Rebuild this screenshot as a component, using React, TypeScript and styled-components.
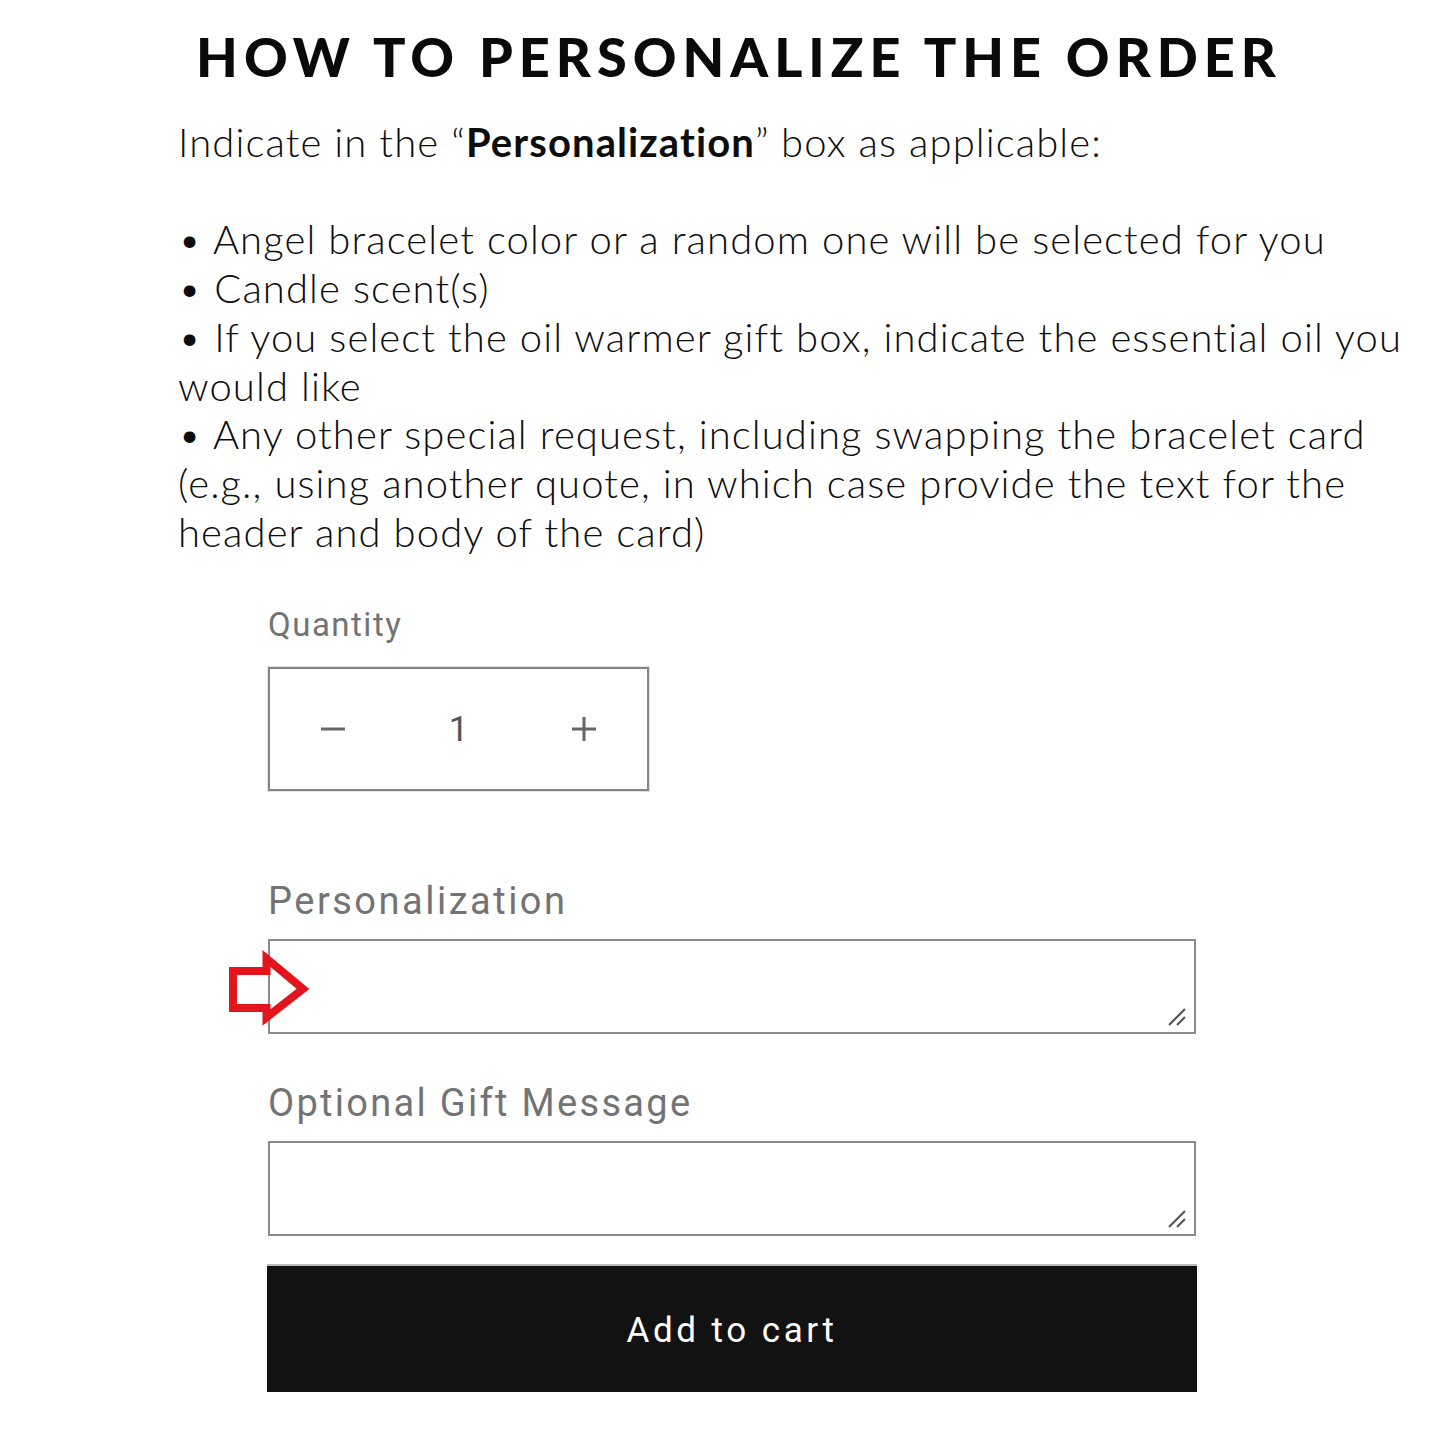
import React from "react";
import styled, { createGlobalStyle } from "styled-components";

const GlobalStyle = createGlobalStyle`
  html, body { margin: 0; padding: 0; background: #ffffff; }
  body { width: 1445px; min-height: 1445px; }
  * { box-sizing: border-box; }
`;

const Page = styled.div`
  width: 1445px;
  height: 1445px;
  background: #fff;
  padding-top: 22px;
  display: flex;
  flex-direction: column;
`;

const Heading = styled.h1`
  margin: 0 0 0 33px;
  text-align: center;
  font-family: Lato, "Liberation Sans", sans-serif;
  font-weight: 900;
  font-size: 54px;
  line-height: 70px;
  letter-spacing: 6px;
  color: #0a0a0a;
`;

const Instructions = styled.div`
  margin: 26px 0 0 178px;
  font-family: Lato, "Liberation Sans", sans-serif;
  font-weight: 300;
  font-size: 40px;
  letter-spacing: 1.1px;
  line-height: 48.7px;
  color: #0d0d0d;
  white-space: nowrap;
`;

const Strong = styled.b`
  font-weight: 700;
`;

const Form = styled.div`
  margin: 47px 0 0 268px;
  width: 928px;
  display: flex;
  flex-direction: column;
`;

const Label = styled.div<{ $size: number; $space: number }>`
  font-family: Roboto, "Liberation Sans", sans-serif;
  font-size: ${(p) => p.$size}px;
  letter-spacing: ${(p) => p.$space}px;
  line-height: 44px;
  color: #737373;
`;

const QtyBox = styled.div`
  margin-top: 20px;
  width: 381px;
  height: 124px;
  border: 2px solid #858585;
  box-shadow: 0 0 0 1px #e2e2e2;
  display: grid;
  grid-template-columns: repeat(3, 1fr);
  align-items: center;
  justify-items: center;
`;

const QtyButton = styled.button`
  border: 0;
  background: transparent;
  padding: 0;
  display: flex;
  align-items: center;
  justify-content: center;
  width: 40px;
  height: 40px;
`;

const QtyValue = styled.span`
  font-family: Roboto, "Liberation Sans", sans-serif;
  font-size: 35px;
  color: #555;
`;

const FieldGroup = styled.div<{ $top: number }>`
  margin-top: ${(p) => p.$top}px;
  display: flex;
  flex-direction: column;
`;

const AreaWrap = styled.div`
  position: relative;
  margin-top: 16px;
  width: 928px;
  height: 95px;
`;

const TextArea = styled.textarea`
  display: block;
  width: 100%;
  height: 100%;
  border: 2px solid #8a8a8a;
  border-radius: 0;
  resize: none;
  background: #fff;
  outline: none;
`;

const Grip = styled.svg`
  position: absolute;
  right: 8px;
  bottom: 6px;
`;

const Arrow = styled.svg`
  position: absolute;
  left: -46px;
  top: 7px;
  overflow: visible;
`;

const CartButton = styled.button`
  margin-top: 28px;
  width: 930px;
  margin-left: -1px;
  height: 128px;
  border: 0;
  border-top: 2px solid #bdbdbd;
  background: #121212;
  color: #fff;
  font-family: Roboto, "Liberation Sans", sans-serif;
  font-size: 35px;
  letter-spacing: 3.5px;
  padding-top: 4px;
`;

const ResizeGrip = () => (
  <Grip width="22" height="22" viewBox="0 0 22 22">
    <line x1="3" y1="19" x2="19" y2="3" stroke="#555" strokeWidth="2.2" />
    <line x1="11" y1="19" x2="19" y2="11" stroke="#555" strokeWidth="2.2" />
  </Grip>
);

export default function App() {
  return (
    <>
      <GlobalStyle />
      <Page>
        <Heading>HOW TO PERSONALIZE THE ORDER</Heading>
        <Instructions>
          Indicate in the “<Strong>Personalization</Strong>” box as applicable:
          <br />
          <br />• Angel bracelet color or a random one will be selected for you
          <br />• Candle scent(s)
          <br />• If you select the oil warmer gift box, indicate the essential oil you
          <br />would like
          <br />• Any other special request, including swapping the bracelet card
          <br />(e.g., using another quote, in which case provide the text for the
          <br />header and body of the card)
        </Instructions>
        <Form>
          <Label $size={33} $space={1.5}>Quantity</Label>
          <QtyBox>
            <QtyButton aria-label="Decrease quantity">
              <svg width="26" height="4" viewBox="0 0 26 4">
                <rect x="1" y="0.5" width="24" height="3" fill="#666" />
              </svg>
            </QtyButton>
            <QtyValue>1</QtyValue>
            <QtyButton aria-label="Increase quantity">
              <svg width="26" height="26" viewBox="0 0 26 26">
                <rect x="1" y="11.5" width="24" height="3" fill="#666" />
                <rect x="11.5" y="1" width="3" height="24" fill="#666" />
              </svg>
            </QtyButton>
          </QtyBox>
          <FieldGroup $top={88}>
            <Label $size={38} $space={2.5}>Personalization</Label>
            <AreaWrap>
              <TextArea aria-label="Personalization" />
              <ResizeGrip />
              <Arrow width="96" height="84" viewBox="0 0 96 84">
                <polygon
                  points="11,25 44.5,25 44.5,12.5 81,43 44.5,71.5 44.5,62 11,62"
                  fill="none"
                  stroke="#e3141d"
                  strokeWidth="8"
                  strokeLinejoin="miter"
                />
              </Arrow>
            </AreaWrap>
          </FieldGroup>
          <FieldGroup $top={47}>
            <Label $size={38} $space={2.3}>Optional Gift Message</Label>
            <AreaWrap>
              <TextArea aria-label="Optional Gift Message" />
              <ResizeGrip />
            </AreaWrap>
          </FieldGroup>
          <CartButton>Add to cart</CartButton>
        </Form>
      </Page>
    </>
  );
}
